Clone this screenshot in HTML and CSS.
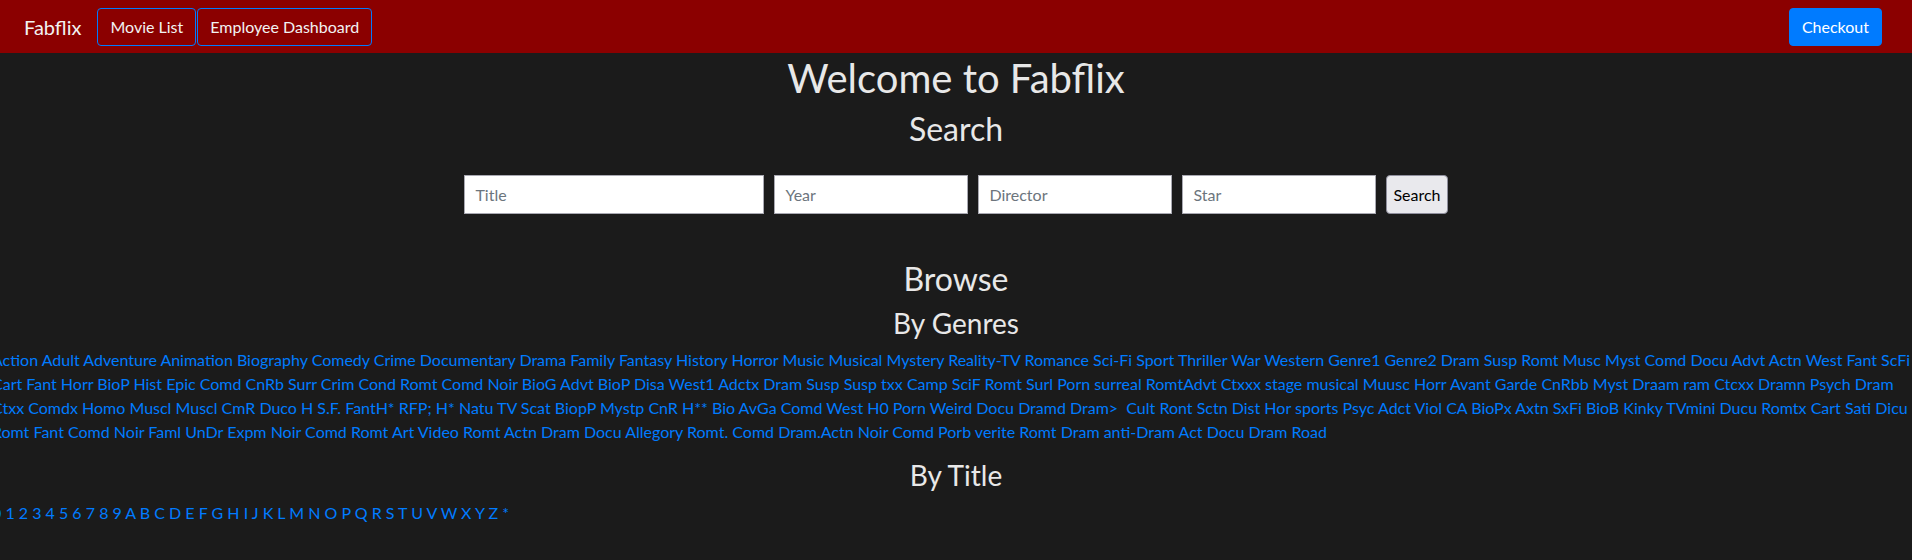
FILE: index.html
```html
<!DOCTYPE html>
<html lang="en">
<head>
<meta charset="utf-8">
<title>Fabflix</title>
<link rel="stylesheet" href="styles.css">
</head>
<body>
<nav class="navbar">
  <a class="brand" href="#">Fabflix</a>
  <a class="btn btn-outline" href="#">Movie List</a>
  <a class="btn btn-outline" href="#">Employee Dashboard</a>
  <a class="btn btn-primary checkout" href="#">Checkout</a>
</nav>
<main class="main">
  <h1 class="h1">Welcome to Fabflix</h1>
  <h2 class="h2">Search</h2>
  <form class="search-form">
    <input class="field field-title" type="text" placeholder="Title">
    <input class="field" type="text" placeholder="Year">
    <input class="field" type="text" placeholder="Director">
    <input class="field" type="text" placeholder="Star">
    <button class="search-btn" type="button">Search</button>
  </form>
  <h2 class="h2 browse">Browse</h2>
  <h3 class="h3">By Genres</h3>
  <div class="genres">
    <div class="genre-row"><a href="#">Action</a> <a href="#">Adult</a> <a href="#">Adventure</a> <a href="#">Animation</a> <a href="#">Biography</a> <a href="#">Comedy</a> <a href="#">Crime</a> <a href="#">Documentary</a> <a href="#">Drama</a> <a href="#">Family</a> <a href="#">Fantasy</a> <a href="#">History</a> <a href="#">Horror</a> <a href="#">Music</a> <a href="#">Musical</a> <a href="#">Mystery</a> <a href="#">Reality-TV</a> <a href="#">Romance</a> <a href="#">Sci-Fi</a> <a href="#">Sport</a> <a href="#">Thriller</a> <a href="#">War</a> <a href="#">Western</a> <a href="#">Genre1</a> <a href="#">Genre2</a> <a href="#">Dram</a> <a href="#">Susp</a> <a href="#">Romt</a> <a href="#">Musc</a> <a href="#">Myst</a> <a href="#">Comd</a> <a href="#">Docu</a> <a href="#">Advt</a> <a href="#">Actn</a> <a href="#">West</a> <a href="#">Fant</a> <a href="#">ScFi</a></div>
    <div class="genre-row"><a href="#">Cart</a> <a href="#">Fant</a> <a href="#">Horr</a> <a href="#">BioP</a> <a href="#">Hist</a> <a href="#">Epic</a> <a href="#">Comd</a> <a href="#">CnRb</a> <a href="#">Surr</a> <a href="#">Crim</a> <a href="#">Cond</a> <a href="#">Romt</a> <a href="#">Comd</a> <a href="#">Noir</a> <a href="#">BioG</a> <a href="#">Advt</a> <a href="#">BioP</a> <a href="#">Disa</a> <a href="#">West1</a> <a href="#">Adctx</a> <a href="#">Dram</a> <a href="#">Susp</a> <a href="#">Susp</a> <a href="#">txx</a> <a href="#">Camp</a> <a href="#">SciF</a> <a href="#">Romt</a> <a href="#">Surl</a> <a href="#">Porn</a> <a href="#">surreal</a> <a href="#">RomtAdvt</a> <a href="#">Ctxxx</a> <a href="#">stage musical</a> <a href="#">Muusc</a> <a href="#">Horr</a> <a href="#">Avant Garde</a> <a href="#">CnRbb</a> <a href="#">Myst</a> <a href="#">Draam</a> <a href="#">ram</a> <a href="#">Ctcxx</a> <a href="#">Dramn</a> <a href="#">Psych</a> <a href="#">Dram</a></div>
    <div class="genre-row"><a href="#">Ctxx</a> <a href="#">Comdx</a> <a href="#">Homo</a> <a href="#">Muscl</a> <a href="#">Muscl</a> <a href="#">CmR</a> <a href="#">Duco</a> <a href="#">H</a> <a href="#">S.F.</a> <a href="#">FantH*</a> <a href="#">RFP;</a> <a href="#">H*</a> <a href="#">Natu</a> <a href="#">TV</a> <a href="#">Scat</a> <a href="#">BiopP</a> <a href="#">Mystp</a> <a href="#">CnR</a> <a href="#">H**</a> <a href="#">Bio</a> <a href="#">AvGa</a> <a href="#">Comd</a> <a href="#">West</a> <a href="#">H0</a> <a href="#">Porn</a> <a href="#">Weird</a> <a href="#">Docu</a> <a href="#">Dramd</a> <a href="#">Dram&gt;</a>&nbsp; <a href="#">Cult</a> <a href="#">Ront</a> <a href="#">Sctn</a> <a href="#">Dist</a> <a href="#">Hor</a> <a href="#">sports</a> <a href="#">Psyc</a> <a href="#">Adct</a> <a href="#">Viol</a> <a href="#">CA</a> <a href="#">BioPx</a> <a href="#">Axtn</a> <a href="#">SxFi</a> <a href="#">BioB</a> <a href="#">Kinky</a> <a href="#">TVmini</a> <a href="#">Ducu</a> <a href="#">Romtx</a> <a href="#">Cart</a> <a href="#">Sati</a> <a href="#">Dicu</a></div>
    <div class="genre-row"><a href="#">Romt</a> <a href="#">Fant</a> <a href="#">Comd</a> <a href="#">Noir</a> <a href="#">Faml</a> <a href="#">UnDr</a> <a href="#">Expm</a> <a href="#">Noir</a> <a href="#">Comd</a> <a href="#">Romt</a> <a href="#">Art Video</a> <a href="#">Romt</a> <a href="#">Actn</a> <a href="#">Dram</a> <a href="#">Docu</a> <a href="#">Allegory</a> <a href="#">Romt.</a> <a href="#">Comd</a> <a href="#">Dram.Actn</a> <a href="#">Noir</a> <a href="#">Comd</a> <a href="#">Porb verite</a> <a href="#">Romt</a> <a href="#">Dram</a> <a href="#">anti-Dram</a> <a href="#">Act</a> <a href="#">Docu</a> <a href="#">Dram</a> <a href="#">Road</a></div>
  </div>
  <h3 class="h3 by-title">By Title</h3>
  <div class="titles"><a href="#">0</a> <a href="#">1</a> <a href="#">2</a> <a href="#">3</a> <a href="#">4</a> <a href="#">5</a> <a href="#">6</a> <a href="#">7</a> <a href="#">8</a> <a href="#">9</a> <a href="#">A</a> <a href="#">B</a> <a href="#">C</a> <a href="#">D</a> <a href="#">E</a> <a href="#">F</a> <a href="#">G</a> <a href="#">H</a> <a href="#">I</a> <a href="#">J</a> <a href="#">K</a> <a href="#">L</a> <a href="#">M</a> <a href="#">N</a> <a href="#">O</a> <a href="#">P</a> <a href="#">Q</a> <a href="#">R</a> <a href="#">S</a> <a href="#">T</a> <a href="#">U</a> <a href="#">V</a> <a href="#">W</a> <a href="#">X</a> <a href="#">Y</a> <a href="#">Z</a> <a href="#">*</a></div>
</main>
</body>
</html>
```
FILE: styles.css
```css
* { box-sizing: border-box; }

body {
  margin: 0;
  background: #1b1b1b;
  color: #e6e6e6;
  font-family: Lato, "Open Sans", sans-serif;
  font-size: 16px;
  line-height: 1.5;
  overflow: hidden;
}

a { text-decoration: none; }

.navbar {
  display: flex;
  align-items: center;
  height: 53px;
  padding: 0 30px 0 24px;
  background: #8b0000;
}

.brand {
  color: #f2f2f2;
  font-size: 20px;
  line-height: 30px;
  margin-right: 16px;
}

.btn {
  display: inline-block;
  height: 38px;
  padding: 6px 12px;
  font-size: 16px;
  line-height: 24px;
  border-radius: 4px;
  color: #f2f2f2;
  border: 1px solid #007bff;
}

.btn-outline { background: transparent; margin-right: 1px; }

.btn-primary {
  background: #007bff;
  color: #fff;
}

.checkout { margin-left: auto; }

.main { text-align: center; }

.h1, .h2, .h3 {
  margin: 0 0 8px;
  font-weight: 400;
  line-height: 1.2;
  color: #e8e8e8;
}

.h1 { font-size: 40px; margin-top: 1px; }
.h2 { font-size: 32px; }
.h3 { font-size: 28px; }

.search-form {
  display: flex;
  justify-content: center;
  align-items: center;
  gap: 10px;
  margin: 27px 0 0;
}

.field {
  width: 194px;
  height: 39px;
  padding: 0 10px;
  border: 1px solid #a9a9b2;
  background: #fff;
  font-family: inherit;
  font-size: 16px;
  color: #222;
}

.field-title { width: 300px; }

.field::placeholder { color: #6c757d; }

.search-btn {
  height: 39px;
  padding: 0 6px;
  border: 1px solid #8f8f9d;
  border-radius: 4px;
  background: #e9e9ed;
  color: #000;
  font-family: inherit;
  font-size: 16px;
}

.browse { margin-top: 46px; }

.genres, .titles {
  text-align: left;
  margin-left: -8px;
  white-space: nowrap;
}

.genres { margin-bottom: 15px; }

.genres a, .titles a { color: #007bff; }

.by-title { margin-bottom: 8px; }
```
